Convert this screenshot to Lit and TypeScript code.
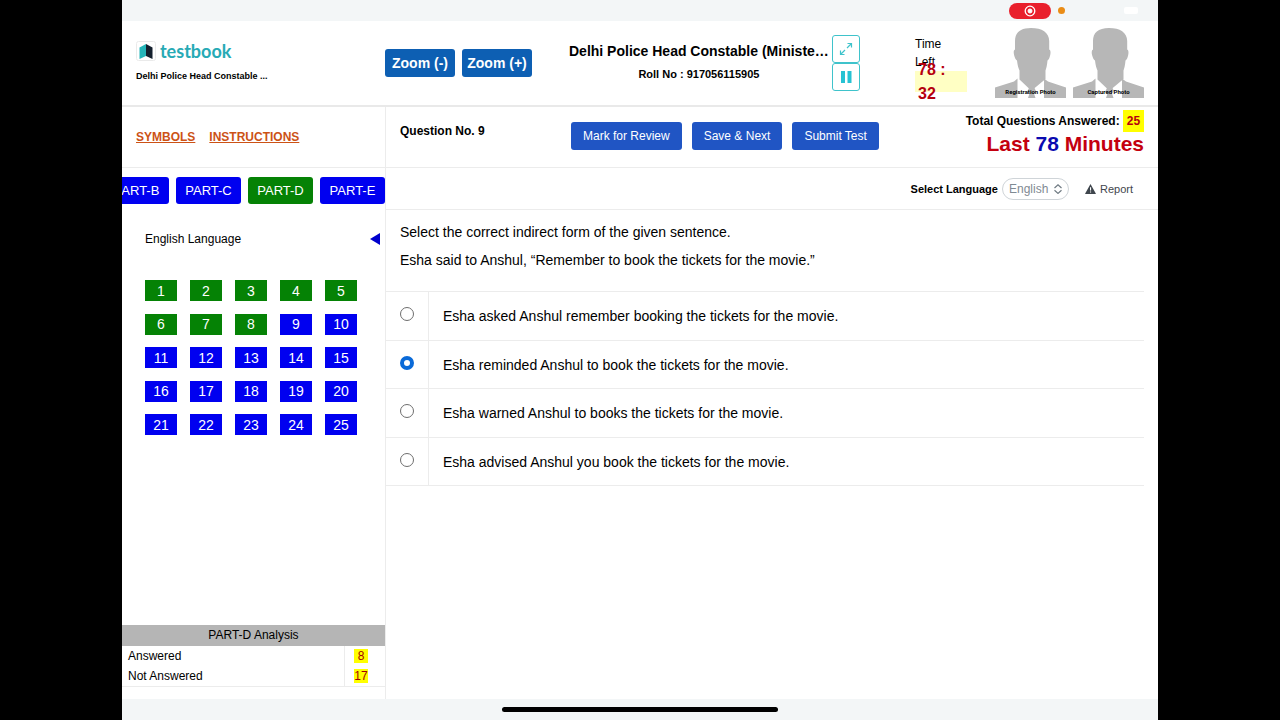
import { LitElement, html, css, svg } from "lit";
import { customElement, property, state } from "lit/decorators.js";
import { classMap } from "lit/directives/class-map.js";

@customElement("candidate-photo")
class CandidatePhoto extends LitElement {
  @property() label = "";

  static styles = css`
    :host { display: block; }
    .photo { display: grid; margin: 0; width: 71px; }
    .figure { grid-area: 1 / 1; display: block; width: 71px; height: 71px; }
    .caption {
      grid-area: 1 / 1; align-self: end; text-align: center; white-space: nowrap;
      font-family: Roboto, Arial, sans-serif; font-size: 6px; line-height: 8px; font-weight: bold; padding-bottom: 3px;
    }
  `;

  render() {
    return html`
      <figure class="photo">
        <svg class="figure" viewBox="0 0 71 71" aria-hidden="true">
          <path fill="#b7b7b7" d="M36 0C25 0 20 5 20 13v8.500c-1.500.8-1.600 3-.8 6 .7 2.500 1.500 4.500 2.800 5 .6 5 1.500 8 2.500 10V51.500L34.500 61h4l12-10v-8.500c.8-2 1.500-5 2-10 1.200-.5 2-2.500 2.600-5 .7-3 .6-5.200-.9-6V13C54.200 4.500 47 0 36 0Z"/>
          <path fill="#b7b7b7" d="M0 70V59.500L19 53.500 22.500 50.500V70ZM71 70V59.500L53 53.500 49 50.500V70ZM34 60h5.500l1.500 3-2 2.500 1.500 4.500h-7.500l1.500-4.500-2-2.500Z"/>
        </svg>
        <figcaption class="caption">${this.label}</figcaption>
      </figure>
    `;
  }
}

@customElement("app-root")
class AppRoot extends LitElement {
  @state() private selected = 1;

  private readonly parts = ["PART-B", "PART-C", "PART-D", "PART-E"];
  private readonly questions = Array.from({ length: 25 }, (_, i) => i + 1);
  private readonly options = [
    "Esha asked Anshul remember booking the tickets for the movie.",
    "Esha reminded Anshul to book the tickets for the movie.",
    "Esha warned Anshul to books the tickets for the movie.",
    "Esha advised Anshul you book the tickets for the movie.",
  ];

  static styles = css`
    :host {
      display: flex; flex-direction: column; box-sizing: border-box; min-height: 100vh;
      padding: 0 122px; background: #000; color: #000;
      font-family: "Liberation Sans", Arial, Helvetica, sans-serif; font-size: 12px;
    }
    * { box-sizing: border-box; }
    button, select, input { font: inherit; margin: 0; }
    button { padding: 0; border: 0; cursor: pointer; white-space: nowrap; }
    svg { display: block; }

    .status {
      display: flex; align-items: center; justify-content: flex-end; gap: 7px;
      height: 21px; padding-right: 20px; background: #f3f6f7;
    }
    .recording {
      display: grid; place-items: center; width: 42px; height: 16px;
      border-radius: 8px; background: #e9202c;
    }
    .dot { width: 7px; height: 7px; border-radius: 50%; background: #ea8c16; margin-right: 52px; }
    .battery { width: 14px; height: 7px; border-radius: 2px; background: #fff; }

    .header {
      display: flex; align-items: flex-start; height: 86px; padding: 0 14px;
      background: #fff; border-bottom: 2px solid #e9e9e9;
    }
    .brand { width: 249px; padding-top: 19px; }
    .logo { display: flex; align-items: center; gap: 4px; height: 22px; }
    .logo-text {
      color: #27aab5; font-family: Lato, "Noto Sans", sans-serif; font-weight: bold;
      font-size: 18px; line-height: 22px;
    }
    .exam { margin-top: 8px; font-size: 9px; line-height: 12px; font-weight: bold; }
    .zooms { display: flex; gap: 7px; padding-top: 28px; }
    .zoom {
      width: 70px; height: 28px; border-radius: 3px; background: #0d5fb3; color: #fff;
      font-weight: bold; font-size: 14px;
    }
    .title { margin-left: 37px; padding-top: 20px; text-align: center; font-weight: bold; white-space: nowrap; }
    .name { margin: 0; font-size: 14px; line-height: 20px; }
    .roll { margin: 6px 0 0; font-size: 11px; line-height: 14px; }
    .tools { display: flex; flex-direction: column; margin-left: 3px; padding-top: 14px; }
    .tool {
      display: grid; place-items: center; width: 28px; height: 28px;
      border: 1px solid #3fc3cb; border-radius: 3px; background: #fff;
    }
    .time { width: 52px; margin-left: auto; padding-top: 14px; }
    .time-label { width: 36px; line-height: 18px; }
    .clock {
      display: flex; align-items: center; height: 21px; padding: 0 3px; background: #ffffc4;
      color: #b5000f; font-weight: bold; font-size: 16px; line-height: 24px;
    }
    .photos { display: flex; gap: 7px; margin-left: 28px; padding-top: 7px; }

    .body { flex: 1; display: grid; grid-template-columns: 264px 1fr; background: #fff; }
    .side { display: flex; flex-direction: column; border-right: 1px solid #ececec; }
    .links {
      display: flex; align-items: center; gap: 14px; height: 61px; padding-left: 14px;
      border-bottom: 1px solid #ececec;
    }
    .link { color: #cc5216; font-weight: bold; }
    .parts { display: flex; justify-content: flex-end; gap: 7px; padding-top: 9px; overflow: hidden; }
    .part { flex: none; width: 65px; height: 27px; border-radius: 3px; background: #0000f0; color: #fff; font-size: 13px; }
    .section {
      display: flex; align-items: center; justify-content: space-between;
      height: 16px; margin: 27px 5px 0 23px;
    }
    .numbers {
      display: grid; grid-template-columns: repeat(5, 32px); grid-auto-rows: 21px;
      justify-content: space-between; align-content: space-between;
      width: 212px; height: 155px; margin: 33px 0 24px 23px;
    }
    .number { background: #0000f0; color: #fff; font-size: 14px; }
    .part.on, .number.on { background: #058205; }
    .analysis {
      width: 100%; margin: auto 0 12px; border-spacing: 0; border-bottom: 1px solid #ececec;
      line-height: 16px;
    }
    .analysis-title { height: 21px; line-height: 21px; background: #b5b5b5; }
    .what { height: 20px; padding: 0 6px; text-align: left; font-weight: normal; border-right: 1px solid #ececec; }
    .count { width: 40px; padding: 0 0 0 9px; }
    .mark { display: block; width: 14px; height: 14px; line-height: 14px; text-align: center; background: #ff0; color: #a30000; }

    .main { min-width: 0; }
    .actions {
      display: flex; align-items: flex-start; height: 61px; padding: 0 14px;
      border-bottom: 1px solid #ececec;
    }
    .question-no { width: 171px; margin: 0; padding-top: 16px; font-size: 12px; line-height: 16px; }
    .buttons { display: flex; gap: 10px; padding-top: 15px; }
    .action { height: 28px; padding: 0 12px; border-radius: 3px; background: #2055c4; color: #fff; }
    .totals { margin-left: auto; padding-top: 3px; text-align: right; font-weight: bold; white-space: nowrap; }
    .total { line-height: 22px; }
    .total-count { display: inline-block; width: 21px; text-align: center; background: #ff0; color: #b5000f; }
    .last { font-size: 21px; line-height: 24px; color: #c4000f; }
    .minutes { color: #0a0ab0; }
    .language {
      display: flex; align-items: center; justify-content: flex-end; height: 42px;
      padding-right: 25px; border-bottom: 1px solid #ececec;
    }
    .language-label { font-size: 11px; font-weight: bold; margin-right: 4px; }
    .picker { display: grid; align-items: center; }
    .select {
      grid-area: 1 / 1; appearance: none; width: 67px; height: 22px; padding: 0 6px; border: 1px solid #cfd4d8;
      border-radius: 11px; background: transparent; color: #7f8a93;
    }
    .chevrons { grid-area: 1 / 1; justify-self: end; margin-right: 7px; pointer-events: none; }
    .report {
      display: flex; align-items: center; gap: 4px; margin-left: 16px; background: none;
      color: #3f464d; font-size: 11px;
    }
    .question { padding: 8px 14px 17px; font-size: 14px; line-height: 28px; }
    .line { margin: 0; }
    .options { display: grid; grid-auto-rows: 1fr; height: 195px; margin-right: 14px; border-top: 1px solid #ececec; font-size: 14px; }
    .option { display: grid; grid-template-columns: 43px 1fr; border-bottom: 1px solid #ececec; }
    .choice { display: grid; justify-items: center; padding-top: 15px; border-right: 1px solid #ececec; }
    .radio { appearance: none; width: 14px; height: 14px; border: 1px solid #6e6e6e; border-radius: 50%; background: #fff; }
    .radio:checked { border: 4px solid #0a6ad8; }
    .answer { padding: 15px 14px 0; line-height: 18px; }

    .footer { display: grid; place-items: center; height: 21px; background: #f3f6f7; }
    .home { width: 276px; height: 5px; border-radius: 3px; background: #000; }
  `;

  private icon(kind: string) {
    return kind === "expand"
      ? html`<svg width="14" height="14" viewBox="0 0 14 14" fill="none" stroke="#3fc3cb">
          ${svg`<path stroke-width="1.200" d="M8 6l4.500-4.500M8.500 1.500h4v4M6 8l-4.500 4.500M1.500 8.500v4h4"/>`}
        </svg>`
      : html`<svg width="12" height="12" viewBox="0 0 12 12" fill="#27c2d3">
          ${svg`<path d="M1 0h4v12H1zM7.500 0h4v12h-4z"/>`}
        </svg>`;
  }

  render() {
    return html`
      <div class="status">
        <span class="recording">
          <svg width="12" height="12" viewBox="0 0 12 12" fill="none" stroke="#fff">
            <circle cx="6" cy="6" r="4.800" stroke-width="1.300"/><circle cx="6" cy="6" r="2" fill="#fff"/>
          </svg>
        </span>
        <span class="dot"></span>
        <span class="battery"></span>
      </div>

      <header class="header">
        <div class="brand">
          <div class="logo">
            <svg width="20" height="20" viewBox="0 0 20 20" aria-hidden="true">
              <rect x=".5" y=".5" width="19" height="19" rx="2" fill="#fff" stroke="#eaeaea"/>
              <path fill="#25b5b9" d="M3.500 6.500L10 3v12l-6.500 3z"/>
              <path fill="#14202e" d="M10 3l6.500 3.500V18L10 15z"/>
            </svg>
            <span class="logo-text">testbook</span>
          </div>
          <div class="exam">Delhi Police Head Constable ...</div>
        </div>
        <div class="zooms">
          <button class="zoom">Zoom (-)</button>
          <button class="zoom">Zoom (+)</button>
        </div>
        <div class="title">
          <h1 class="name">Delhi Police Head Constable (Ministe…</h1>
          <p class="roll">Roll No : 917056115905</p>
        </div>
        <div class="tools">
          <button class="tool" aria-label="Full screen">${this.icon("expand")}</button>
          <button class="tool" aria-label="Pause">${this.icon("pause")}</button>
        </div>
        <div class="time">
          <div class="time-label">Time Left</div>
          <div class="clock">78 : 32</div>
        </div>
        <div class="photos">
          <candidate-photo label="Registration Photo"></candidate-photo>
          <candidate-photo label="Captured Photo"></candidate-photo>
        </div>
      </header>

      <div class="body">
        <aside class="side">
          <nav class="links">
            <a class="link" href="#symbols">SYMBOLS</a>
            <a class="link" href="#instructions">INSTRUCTIONS</a>
          </nav>
          <div class="parts">
            ${this.parts.map((p) => html`<button class=${classMap({ part: true, on: p === "PART-D" })}>${p}</button>`)}
          </div>
          <div class="section">
            <span>English Language</span>
            <svg width="10" height="12" viewBox="0 0 10 12" fill="#0000cd"><path d="M10 0v12L0 6z"/></svg>
          </div>
          <div class="numbers">
            ${this.questions.map((n) => html`<button class=${classMap({ number: true, on: n <= 8 })}>${n}</button>`)}
          </div>
          <table class="analysis">
            <caption class="analysis-title">PART-D Analysis</caption>
            <tbody>
              <tr><th class="what" scope="row">Answered</th><td class="count"><span class="mark">8</span></td></tr>
              <tr><th class="what" scope="row">Not Answered</th><td class="count"><span class="mark">17</span></td></tr>
            </tbody>
          </table>
        </aside>

        <main class="main">
          <div class="actions">
            <h2 class="question-no">Question No. 9</h2>
            <div class="buttons">
              <button class="action">Mark for Review</button>
              <button class="action">Save &amp; Next</button>
              <button class="action">Submit Test</button>
            </div>
            <div class="totals">
              <div class="total">Total Questions Answered: <span class="total-count">25</span></div>
              <div class="last">Last <span class="minutes">78</span> Minutes</div>
            </div>
          </div>
          <div class="language">
            <label class="language-label" for="language">Select Language</label>
            <span class="picker">
              <select class="select" id="language"><option>English</option></select>
              <svg class="chevrons" width="8" height="10" viewBox="0 0 8 10" fill="none" stroke="#6f7a82" stroke-width="1.200">
                <path d="M.5 4L4 .8 7.500 4M.5 6.200L4 9.400l3.500-3.200"/>
              </svg>
            </span>
            <button class="report">
              <svg width="11" height="10" viewBox="0 0 11 10">
                <path fill="#3f464d" d="M5.500 0l5.300 9.500a.4.4 0 0 1-.4.500H.6a.4.4 0 0 1-.4-.5z"/>
                <path fill="#fff" d="M5 3.200h1.100v3.300H5zM5 7.400h1.100v1.100H5z"/>
              </svg>
              Report
            </button>
          </div>
          <div class="question">
            <p class="line">Select the correct indirect form of the given sentence.</p>
            <p class="line">Esha said to Anshul, “Remember to book the tickets for the movie.”</p>
          </div>
          <div class="options" role="radiogroup" aria-label="Answer options">
            ${this.options.map((text, i) => html`
              <label class="option">
                <span class="choice">
                  <input class="radio" type="radio" name="answer" .checked=${this.selected === i}
                    @change=${() => { this.selected = i; }}>
                </span>
                <span class="answer">${text}</span>
              </label>
            `)}
          </div>
        </main>
      </div>
      <div class="footer"><span class="home"></span></div>
    `;
  }
}
